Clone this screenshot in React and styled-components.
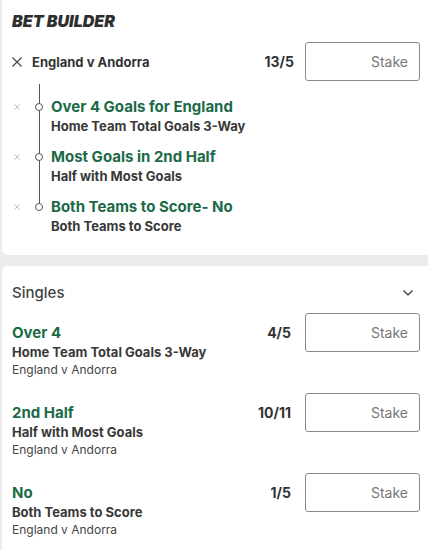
import styled, { createGlobalStyle } from "styled-components";

const GlobalStyle = createGlobalStyle`
  html, body {
    margin: 0;
    padding: 0;
    background: #ececec;
  }
  body {
    font-family: "Inter", "Liberation Sans", sans-serif;
    color: #333;
  }
`;

const legs = [
  { title: "Over 4 Goals for England", market: "Home Team Total Goals 3-Way" },
  { title: "Most Goals in 2nd Half", market: "Half with Most Goals" },
  { title: "Both Teams to Score- No", market: "Both Teams to Score" },
];

const singles = [
  { title: "Over 4", market: "Home Team Total Goals 3-Way", odds: "4/5" },
  { title: "2nd Half", market: "Half with Most Goals", odds: "10/11" },
  { title: "No", market: "Both Teams to Score", odds: "1/5" },
];

const CloseIcon = ({ size, stroke }) => (
  <svg width={size} height={size} viewBox="0 0 10 10">
    <path d="M0.5 0.5 L9.5 9.5 M9.5 0.5 L0.5 9.5" stroke={stroke} strokeWidth="1.2" fill="none" />
  </svg>
);

const App = () => {
  return (
    <Page>
      <GlobalStyle />
      <BuilderCard>
        <Heading>BET BUILDER</Heading>
        <EventRow>
          <RemoveEvent>
            <CloseIcon size={10} stroke="#444" />
          </RemoveEvent>
          <EventName>England v Andorra</EventName>
          <Odds $gap={11}>13/5</Odds>
          <StakeInput placeholder="Stake" />
        </EventRow>

        <Legs>
          {legs.map((leg) => (
            <Leg key={leg.title}>
              <RemoveLeg>
                <CloseIcon size={6} stroke="#aaa" />
              </RemoveLeg>
              <NodeCol>
                <Node />
              </NodeCol>
              <div>
                <SelectionTitle>{leg.title}</SelectionTitle>
                <Market>{leg.market}</Market>
              </div>
            </Leg>
          ))}
        </Legs>
      </BuilderCard>

      <SinglesCard>
        <SinglesHeader>
          <SinglesTitle>Singles</SinglesTitle>
          <svg width="10" height="6" viewBox="0 0 10 6">
            <path d="M0.5 0.5 L5 5 L9.5 0.5" stroke="#333" strokeWidth="1.2" fill="none" />
          </svg>
        </SinglesHeader>

        <SinglesList>
          {singles.map((s) => (
            <SingleRow key={s.title}>
              <SingleText>
                <SelectionTitle>{s.title}</SelectionTitle>
                <Market>{s.market}</Market>
                <EventText>England v Andorra</EventText>
              </SingleText>
              <Odds $gap={14}>{s.odds}</Odds>
              <StakeInput placeholder="Stake" />
            </SingleRow>
          ))}
        </SinglesList>
      </SinglesCard>
    </Page>
  );
};

const Page = styled.div`
  height: 550px;
  padding-left: 2px;
  overflow: hidden;
  background: #ececec;
`;

const Card = styled.div`
  background: #fff;
  margin-right: -8px;
  padding: 0 16px 0 10px;
`;

const BuilderCard = styled(Card)`
  border-radius: 0 0 6px 6px;
  padding-top: 11px;
  padding-bottom: 20px;
`;

const SinglesCard = styled(Card)`
  margin-top: 11px;
  border-radius: 6px 6px 0 0;
  padding-top: 17px;
  padding-bottom: 12px;
`;

const Heading = styled.h2`
  margin: 0;
  font-size: 16px;
  line-height: 20px;
  font-weight: 900;
  font-style: italic;
  letter-spacing: 0;
  color: #2e2e2e;
`;

const EventRow = styled.div`
  display: flex;
  align-items: center;
  margin-top: 11px;
`;

const RemoveEvent = styled.span`
  display: flex;
  width: 10px;
  margin-right: 10px;
`;

const EventName = styled.span`
  font-size: 13px;
  font-weight: 700;
  color: #333;
`;

const Odds = styled.span`
  margin-left: auto;
  margin-right: ${(p) => p.$gap}px;
  font-size: 14px;
  line-height: 39px;
  font-weight: 700;
  color: #333;
  white-space: nowrap;
`;

const StakeInput = styled.input`
  box-sizing: border-box;
  flex: none;
  width: 115px;
  height: 39px;
  border: 1px solid #8a8a8a;
  border-radius: 3px;
  padding: 0 11px;
  text-align: right;
  font-family: "Inter", "Liberation Sans", sans-serif;
  font-size: 14px;
  background: #fff;
  outline: none;

  &::placeholder {
    color: #777;
  }
`;

const Legs = styled.div`
  position: relative;
  display: flex;
  flex-direction: column;
  gap: 12px;
  margin-top: 3px;
  padding-top: 13px;

  &::before {
    content: "";
    position: absolute;
    left: 26.5px;
    top: 0;
    bottom: 28px;
    width: 1px;
    background: #555;
  }
`;

const Leg = styled.div`
  display: flex;
  align-items: flex-start;
`;

const RemoveLeg = styled.span`
  display: flex;
  justify-content: center;
  align-items: center;
  width: 10px;
  height: 20px;
`;

const NodeCol = styled.span`
  display: flex;
  justify-content: center;
  align-items: center;
  width: 14px;
  height: 20px;
  margin-left: 10px;
  margin-right: 5px;
  position: relative;
  z-index: 1;
`;

const Node = styled.span`
  box-sizing: border-box;
  width: 8px;
  height: 8px;
  border-radius: 50%;
  border: 1.3px solid #555;
  background: #fff;
`;

const SelectionTitle = styled.div`
  font-size: 15px;
  line-height: 20px;
  font-weight: 700;
  color: #1b6a47;
`;

const Market = styled.div`
  font-size: 13px;
  line-height: 18px;
  font-weight: 700;
  color: #383838;
`;

const EventText = styled.div`
  font-size: 12px;
  line-height: 17px;
  font-weight: 400;
  color: #444;
`;

const SinglesHeader = styled.div`
  display: flex;
  justify-content: space-between;
  align-items: center;

  svg {
    margin-right: 7px;
  }
`;

const SinglesTitle = styled.span`
  font-size: 15px;
  line-height: 20px;
  font-weight: 500;
  color: #444;
`;

const SinglesList = styled.div`
  display: flex;
  flex-direction: column;
  gap: 15px;
  margin-top: 10px;
`;

const SingleRow = styled.div`
  display: flex;
  align-items: flex-start;
`;

const SingleText = styled.div`
  margin-top: 10px;
`;

export default App;
